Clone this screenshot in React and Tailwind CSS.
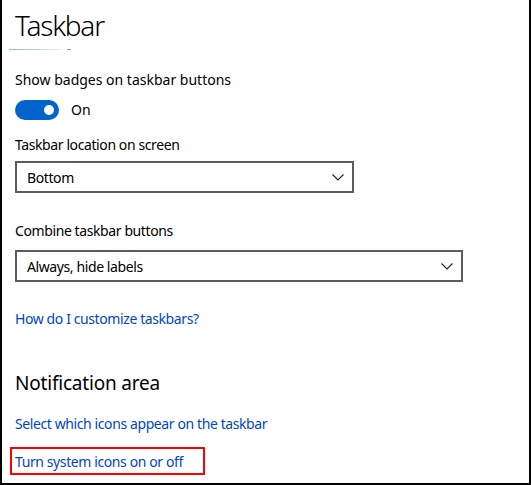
const FONT = { fontFamily: '"Noto Sans", "Open Sans", sans-serif' };

function Chevron() {
  return (
    <svg width="12" height="7" viewBox="0 0 12 7" fill="none" className="text-[#222]">
      <polyline points="0.5,0.5 6,6 11.5,0.5" stroke="currentColor" strokeWidth="1.1" />
    </svg>
  );
}

function Dropdown({ value, width }) {
  return (
    <div
      className={`flex h-[32px] items-center justify-between border-2 border-[#5c5c5c] bg-white pl-[10px] pr-[8px] ${width}`}
    >
      <span className="text-[14px] tracking-[-0.4px] text-black">{value}</span>
      <Chevron />
    </div>
  );
}

export default function App() {
  return (
    <div
      style={FONT}
      className="box-border h-[485px] w-[531px] overflow-hidden border-x-2 border-b-2 border-black bg-white pl-[13px]"
    >
      <h1 className="mt-[5px] text-[28px] font-light leading-[40px] tracking-[-1.2px] text-black">Taskbar</h1>
      <div className="ml-[-6px] mt-[4px] flex items-center gap-[5px]">
        <div className="h-[1px] w-[53px] bg-gradient-to-r from-[#8fb4e8] to-[#e8f0fb]" />
        <div className="h-[1px] w-[4px] bg-[#999]" />
      </div>

      <p className="mt-[20px] text-[14px] leading-[20px] text-black">Show badges on taskbar buttons</p>
      <div className="mt-[9px] flex items-center gap-[12px]">
        <div className="flex h-[20px] w-[44px] items-center justify-end rounded-full bg-[#0064cc] pr-[5px]">
          <div className="h-[10px] w-[10px] rounded-full bg-white" />
        </div>
        <span className="text-[14px] text-black">On</span>
      </div>

      <p className="mt-[15px] text-[14px] leading-[20px] tracking-[-0.4px] text-black">Taskbar location on screen</p>
      <div className="mt-[6px]">
        <Dropdown value="Bottom" width="w-[339px]" />
      </div>

      <p className="mt-[28px] text-[14px] leading-[20px] tracking-[-0.4px] text-black">Combine taskbar buttons</p>
      <div className="mt-[9px]">
        <Dropdown value="Always, hide labels" width="w-[448px]" />
      </div>

      <p className="mt-[27px] text-[14px] leading-[20px] tracking-[-0.4px] text-[#0046c8]">
        How do I customize taskbars?
      </p>

      <h2 className="mt-[40px] text-[19px] font-normal leading-[28px] tracking-[-0.2px] text-black">
        Notification area
      </h2>

      <p className="mt-[17px] text-[14px] leading-[20px] tracking-[-0.4px] text-[#0046c8]">
        Select which icons appear on the taskbar
      </p>

      <div className="ml-[-5px] mt-[13px] inline-block border-2 border-[#ff0000] pl-[3px] pr-[20px]">
        <span className="text-[14px] leading-[22px] tracking-[-0.4px] text-[#0046c8]">Turn system icons on or off</span>
      </div>
    </div>
  );
}
